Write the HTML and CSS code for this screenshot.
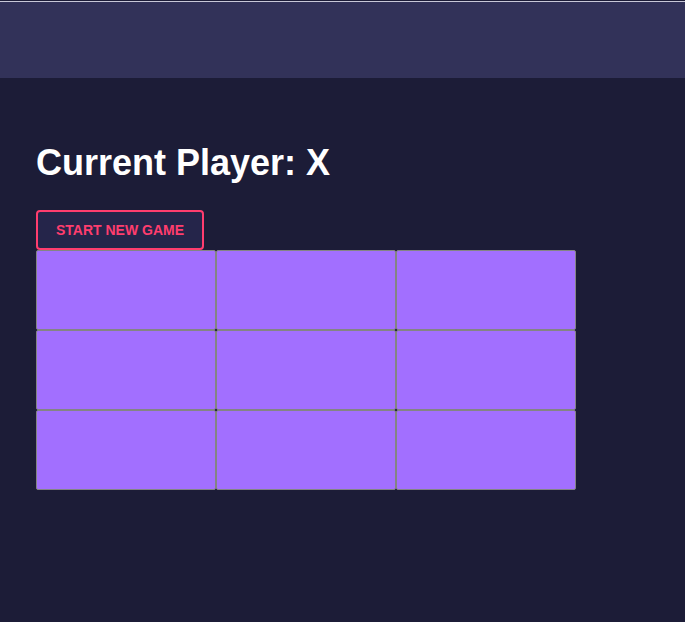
FILE: index.html
```html
<!DOCTYPE html>
<html>
<head>
<meta charset="utf-8">
<link rel="stylesheet" href="styles.css">
</head>
<body>
<header class="topbar"></header>
<main class="game">
  <h1 class="status">Current Player: X</h1>
  <button class="new-game">START NEW GAME</button>
  <div class="board">
    <div class="cell"></div>
    <div class="cell"></div>
    <div class="cell"></div>
    <div class="cell"></div>
    <div class="cell"></div>
    <div class="cell"></div>
    <div class="cell"></div>
    <div class="cell"></div>
    <div class="cell"></div>
  </div>
</main>
</body>
</html>
```

FILE: styles.css
```css
html, body {
  margin: 0;
  padding: 0;
  height: 100%;
}
body {
  background: #1c1c37;
  font-family: "Liberation Sans", Arial, sans-serif;
  padding-top: 1px;
  box-sizing: border-box;
}
.topbar {
  height: 76px;
  background: #323259;
  border-top: 1px solid #c8c8d8;
}
.game {
  padding: 64px 36px 0;
}
.status {
  margin: 0;
  color: #ffffff;
  font-size: 36px;
  font-weight: bold;
  line-height: 41px;
}
.new-game {
  display: block;
  margin-top: 27px;
  height: 40px;
  padding: 0 18px;
  background: #25254a;
  border: 2px solid #ff3d6e;
  border-radius: 4px;
  color: #ff3d6e;
  font-family: "Liberation Sans", Arial, sans-serif;
  font-size: 14px;
  font-weight: bold;
}
.board {
  display: grid;
  grid-template-columns: repeat(3, 180px);
  grid-template-rows: repeat(3, 80px);
}
.cell {
  background: #a26fff;
  border: 1px solid #848484;
  border-radius: 2px;
}
```
